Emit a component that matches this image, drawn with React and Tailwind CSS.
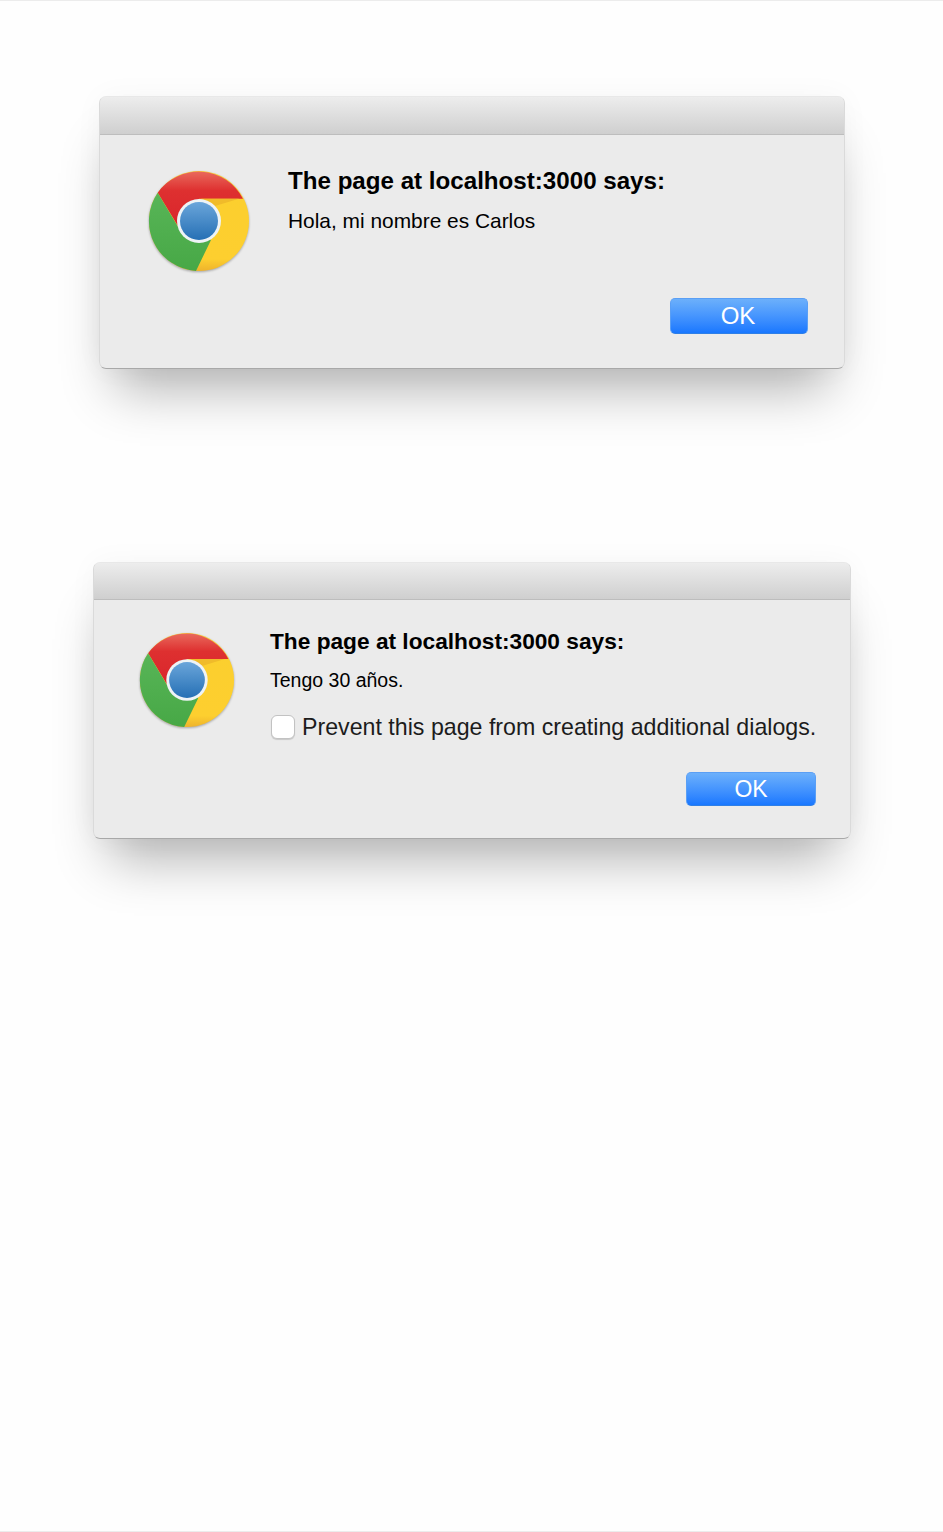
import React from "react";

const ChromeLogo = ({ id, className }) => (
  <svg
    viewBox="-51 -51 102 102"
    className={`drop-shadow-[0_1px_1px_rgba(0,0,0,0.3)] ${className}`}
  >
    <defs>
      <linearGradient id={`${id}-red`} x1="0" y1="0" x2="0" y2="1">
        <stop offset="0" stopColor="#e9695c" />
        <stop offset="0.32" stopColor="#de3030" />
        <stop offset="1" stopColor="#d9232b" />
      </linearGradient>
      <linearGradient id={`${id}-green`} x1="0" y1="0" x2="0" y2="1">
        <stop offset="0" stopColor="#58b557" />
        <stop offset="1" stopColor="#47a846" />
      </linearGradient>
      <linearGradient id={`${id}-yellow`} x1="0" y1="0" x2="0" y2="1">
        <stop offset="0" stopColor="#fbcf2e" />
        <stop offset="0.88" stopColor="#fdcf2f" />
        <stop offset="1" stopColor="#eeb32c" />
      </linearGradient>
      <linearGradient id={`${id}-blue`} x1="0" y1="0" x2="0" y2="1">
        <stop offset="0" stopColor="#6aa5da" />
        <stop offset="1" stopColor="#2670b5" />
      </linearGradient>
    </defs>
    <circle r="50" fill={`url(#${id}-yellow)`} />
    <path
      d="M-41.3 -28.3 A50 50 0 0 1 44 -22.3 L0 -22.3 L-18 10 Z"
      fill={`url(#${id}-red)`}
    />
    <path d="M2 -22.3 L40 -22.3 L16 -15 Z" fill="#f0bb2a" />
    <path
      d="M-41.3 -28.3 L-19 9 L0 12 L12 19 L-3 49.9 A50 50 0 0 1 -41.3 -28.3 Z"
      fill={`url(#${id}-green)`}
    />
    <circle r="22" fill="#eef3f6" />
    <circle r="19" fill={`url(#${id}-blue)`} />
  </svg>
);

const OkButton = ({ className }) => (
  <button
    className={`flex items-center justify-center rounded-[5px] border border-[#5a9ff5] border-b-[#2f7fe6] bg-gradient-to-b from-[#6cb0fb] to-[#1877ff] text-white ${className}`}
  >
    OK
  </button>
);

const Dialog = ({ className, children }) => (
  <div
    className={`overflow-hidden rounded-[7px] border border-[#dadada] border-t-[#e8e8e8] border-b-[#a8a8a8] bg-[#ebebeb] ${className}`}
  >
    {children}
  </div>
);

const App = () => {
  return (
    <div
      className="flex h-[1532px] flex-col border-y border-[#ececec] bg-[#fefefe] pt-[95px] text-black"
      style={{ fontFamily: '"Liberation Sans", Arial, sans-serif' }}
    >
      <div className="ml-[99px] w-[746px] rounded-[7px] shadow-[0_36px_50px_-16px_rgba(0,0,0,0.3),0_0_30px_rgba(0,0,0,0.035)]">
        <Dialog className="h-[273px]">
          <div className="h-[38px] border-b border-[#bdbdbd] bg-gradient-to-b from-[#ededed] to-[#cfcfcf]" />
          <div className="flex pl-[48px] pt-[35px] pr-[36px]">
            <ChromeLogo id="first" className="h-[102px] w-[102px] shrink-0" />
            <div className="ml-[38px] flex-1">
              <h2 className="mt-[-4px] text-[24.15px] font-bold leading-[30px]">
                The page at localhost:3000 says:
              </h2>
              <p className="mt-[13px] text-[20.9px] leading-[24px]">
                Hola, mi nombre es Carlos
              </p>
            </div>
          </div>
          <div className="mt-[26px] flex justify-end pr-[36px]">
            <OkButton className="h-[36px] w-[138px] pr-[2px] text-[24px]" />
          </div>
        </Dialog>
      </div>

      <div className="ml-[93px] mt-[193px] w-[758px] rounded-[7px] shadow-[0_36px_50px_-16px_rgba(0,0,0,0.3),0_0_30px_rgba(0,0,0,0.035)]">
        <Dialog className="h-[277px]">
          <div className="h-[37px] border-b border-[#bdbdbd] bg-gradient-to-b from-[#ededed] to-[#cfcfcf]" />
          <div className="flex pl-[45px] pt-[32px] pr-[34px]">
            <ChromeLogo id="second" className="h-[96px] w-[96px] shrink-0" />
            <div className="ml-[35px] flex-1">
              <h2 className="mt-[-5px] text-[22.7px] font-bold leading-[28px]">
                The page at localhost:3000 says:
              </h2>
              <p className="mt-[14px] text-[19.5px] leading-[22px]">
                Tengo 30 años.
              </p>
              <label className="mt-[23px] flex items-center">
                <span className="ml-[1px] h-[24px] w-[24px] rounded-[6px] border border-[#c2c2c2] bg-white shadow-[0_1px_1px_rgba(0,0,0,0.15)]" />
                <span className="ml-[7px] whitespace-nowrap text-[23.2px] leading-[26px] text-[#1c1c1c]">
                  Prevent this page from creating additional dialogs.
                </span>
              </label>
            </div>
          </div>
          <div className="mt-[32px] flex justify-end pr-[34px]">
            <OkButton className="h-[34px] w-[130px] text-[23px]" />
          </div>
        </Dialog>
      </div>
    </div>
  );
};

export default App;
